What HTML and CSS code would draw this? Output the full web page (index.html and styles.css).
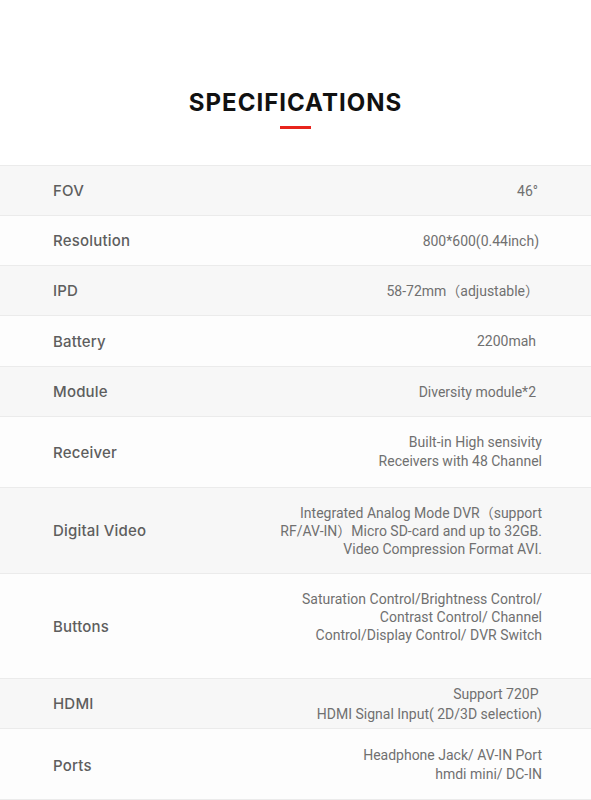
FILE: index.html
```html
<!DOCTYPE html>
<html lang="en">
<head>
<meta charset="utf-8">
<title>Specifications</title>
<link rel="stylesheet" href="styles.css">
</head>
<body>
<section class="specs">
  <header class="specs-head">
    <h2 class="specs-title">SPECIFICATIONS</h2>
    <span class="specs-bar"></span>
  </header>
  <div class="spec-list">
    <div class="spec-row alt h50"><div class="spec-label">FOV</div><div class="spec-value pr4">46°</div></div>
    <div class="spec-row h50"><div class="spec-label">Resolution</div><div class="spec-value pr3">800*600(0.44inch)</div></div>
    <div class="spec-row alt h50"><div class="spec-label">IPD</div><div class="spec-value pr3">58-72mm（adjustable）</div></div>
    <div class="spec-row h51"><div class="spec-label">Battery</div><div class="spec-value pr6">2200mah</div></div>
    <div class="spec-row alt h50"><div class="spec-label">Module</div><div class="spec-value pr6">Diversity module*2</div></div>
    <div class="spec-row h71"><div class="spec-label">Receiver</div><div class="spec-value lh19">Built-in High sensivity<br>Receivers with 48 Channel</div></div>
    <div class="spec-row alt h86"><div class="spec-label">Digital Video</div><div class="spec-value">Integrated Analog Mode DVR（support<br>RF/AV-IN）Micro SD-card and up to 32GB.<br>Video Compression Format AVI.</div></div>
    <div class="spec-row h105"><div class="spec-label">Buttons</div><div class="spec-value trail">Saturation Control/Brightness Control/<br>Contrast Control/ Channel<br>Control/Display Control/ DVR Switch</div></div>
    <div class="spec-row alt h50"><div class="spec-label">HDMI</div><div class="spec-value lh20">Support 720P&nbsp;<br>HDMI Signal Input( 2D/3D selection)</div></div>
    <div class="spec-row h71 last"><div class="spec-label">Ports</div><div class="spec-value lh19">Headphone Jack/ AV-IN Port<br>hmdi mini/ DC-IN</div></div>
  </div>
</section>
</body>
</html>
```

FILE: styles.css
```css
* {
  box-sizing: border-box;
}

html, body {
  margin: 0;
  padding: 0;
  background: #ffffff;
}

body {
  font-family: Inter, "Noto Sans", "Noto Sans CJK SC", sans-serif;
  color: #555;
}

.specs {
  width: 591px;
}

.specs-head {
  display: flex;
  flex-direction: column;
  align-items: center;
  padding-top: 88px;
  padding-bottom: 36px;
}

.specs-title {
  margin: 0;
  font-size: 24px;
  line-height: 30px;
  font-weight: 700;
  letter-spacing: 1px;
  color: #111;
}

.specs-bar {
  display: block;
  width: 31px;
  height: 3px;
  margin-top: 8px;
  background: #e8241d;
}

.spec-list {
  border-top: 1px solid #ebebeb;
}

.spec-row {
  display: flex;
  align-items: center;
  justify-content: space-between;
  padding: 0 49px 0 53px;
  background: #fdfdfd;
  border-bottom: 1px solid #ebebeb;
}

.spec-row.alt {
  background: #f7f7f7;
}

.h50 { min-height: 50px; }
.h51 { min-height: 51px; }
.h71 { min-height: 71px; }
.h86 { min-height: 86px; }
.h105 { min-height: 105px; }

.spec-row.last {
  padding-top: 2px;
}

.spec-label {
  font-size: 15px;
  font-weight: 500;
  color: #5e5e5e;
  letter-spacing: 0.2px;
}

.spec-value {
  font-family: Roboto, "Noto Sans CJK SC", sans-serif;
  font-size: 14px;
  line-height: 18px;
  font-weight: 400;
  color: #707070;
  text-align: right;
}

.spec-value.lh19 { line-height: 19px; }
.spec-value.lh20 { line-height: 20px; }
.spec-value.trail { padding-bottom: 18px; }
.spec-value.pr3 { padding-right: 3px; }
.spec-value.pr4 { padding-right: 4px; }
.spec-value.pr6 { padding-right: 6px; }
```
